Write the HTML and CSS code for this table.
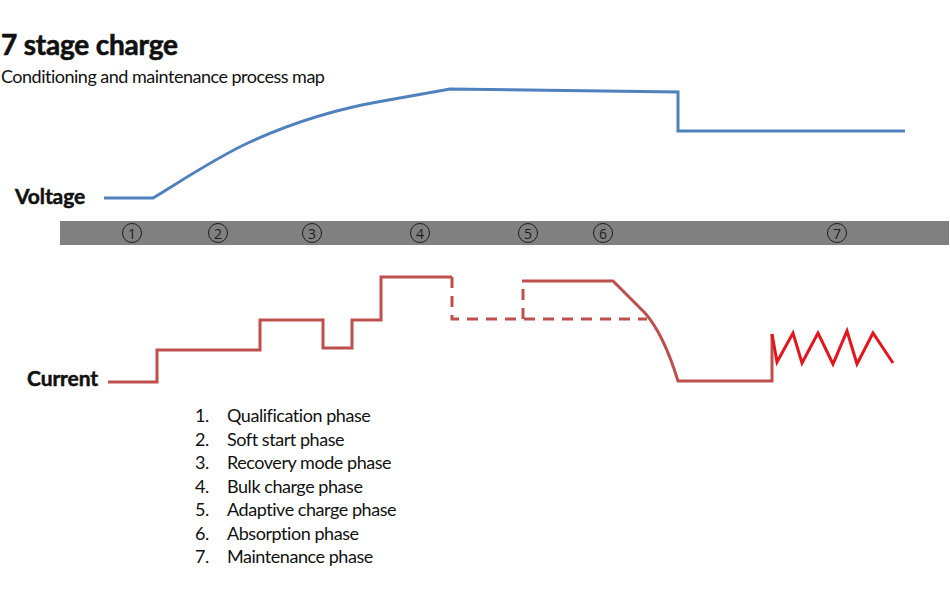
FILE: index.html
```html
<!DOCTYPE html>
<html lang="en">
<head>
<meta charset="utf-8">
<title>7 stage charge</title>
<link rel="stylesheet" href="styles.css">
</head>
<body>
<header class="head">
  <h1 class="title">7 stage charge</h1>
  <p class="subtitle">Conditioning and maintenance process map</p>
</header>
<div class="chart">
  <svg class="plot" viewBox="0 85 950 315" width="950" height="315">
    <rect class="band" x="60" y="221" width="889" height="24"/>
    <g class="marks">
      <g><circle cx="132" cy="233" r="9.5"/><text x="132" y="233">1</text></g>
      <g><circle cx="218" cy="233" r="9.5"/><text x="218" y="233">2</text></g>
      <g><circle cx="312" cy="233" r="9.5"/><text x="312" y="233">3</text></g>
      <g><circle cx="420" cy="233" r="9.5"/><text x="420" y="233">4</text></g>
      <g><circle cx="528" cy="233" r="9.5"/><text x="528" y="233">5</text></g>
      <g><circle cx="603" cy="233" r="9.5"/><text x="603" y="233">6</text></g>
      <g><circle cx="837" cy="233" r="9.5"/><text x="837" y="233">7</text></g>
    </g>
    <path class="volt" d="M104 198 H153 C175 185 215 158 250 142 S330 110 383 101 L450 89 L678 92 V131 H905"/>
    <path class="amp" d="M108 382 H157 V350 H260 V320 H323 V348 H352 V320 H381 V277 H452"/>
    <path class="amp dash" d="M452 277 V319 H647"/>
    <path class="amp dash" d="M523 319 V281"/>
    <path class="amp" d="M522 281 H613 L645 313 C660 330 670 355 678 381 H772 V334"/>
    <path class="zig" d="M772 334 L777 362 L793 333 L802 363 L818 333 L833 364 L847 331 L857 364 L873 333 L893 363"/>
  </svg>
  <div class="axis-label voltage">Voltage</div>
  <div class="axis-label current">Current</div>
</div>
<ol class="phases">
  <li><span class="num">1.</span><span>Qualification phase</span></li>
  <li><span class="num">2.</span><span>Soft start phase</span></li>
  <li><span class="num">3.</span><span>Recovery mode phase</span></li>
  <li><span class="num">4.</span><span>Bulk charge phase</span></li>
  <li><span class="num">5.</span><span>Adaptive charge phase</span></li>
  <li><span class="num">6.</span><span>Absorption phase</span></li>
  <li><span class="num">7.</span><span>Maintenance phase</span></li>
</ol>
</body>
</html>
```

FILE: styles.css
```css
* { box-sizing: border-box; }
html, body { margin: 0; padding: 0; }
body {
  width: 950px;
  height: 600px;
  overflow: hidden;
  background: #ffffff;
  color: #111111;
  font-family: Lato, "Open Sans", sans-serif;
}
.head {
  height: 85px;
  padding: 28px 0 0 1px;
}
.title {
  margin: 0;
  font-size: 28px;
  line-height: 33px;
  font-weight: 700;
  letter-spacing: -0.2px;
  -webkit-text-stroke: 0.6px #111111;
}
.subtitle {
  margin: 5px 0 0 0;
  font-size: 18px;
  line-height: 20px;
  font-weight: 400;
  letter-spacing: -0.5px;
}
.chart {
  position: relative;
  height: 315px;
}
.plot {
  display: block;
}
.band { fill: #808080; }
.marks circle {
  fill: none;
  stroke: #1c1c1c;
  stroke-width: 1;
}
.marks text {
  font-family: "Open Sans", sans-serif;
  font-size: 14px;
  fill: #1c1c1c;
  text-anchor: middle;
  dominant-baseline: central;
}
.volt {
  fill: none;
  stroke: #4f81bd;
  stroke-width: 3;
}
.amp {
  fill: none;
  stroke: #bd4f4d;
  stroke-width: 3;
}
.dash { stroke-dasharray: 11 8; }
.zig {
  fill: none;
  stroke: #e3161d;
  stroke-width: 3;
  stroke-linejoin: miter;
}
.axis-label {
  position: absolute;
  font-size: 21px;
  line-height: 24px;
  font-weight: 700;
  letter-spacing: -0.1px;
  -webkit-text-stroke: 0.5px #111111;
}
.voltage { left: 15px; top: 99px; }
.current { left: 27px; top: 281px; }
.phases {
  list-style: none;
  margin: 4px 0 0 195px;
  padding: 0;
  font-size: 18px;
  line-height: 23.5px;
  letter-spacing: -0.45px;
}
.phases li {
  display: grid;
  grid-template-columns: 32px auto;
}
```
